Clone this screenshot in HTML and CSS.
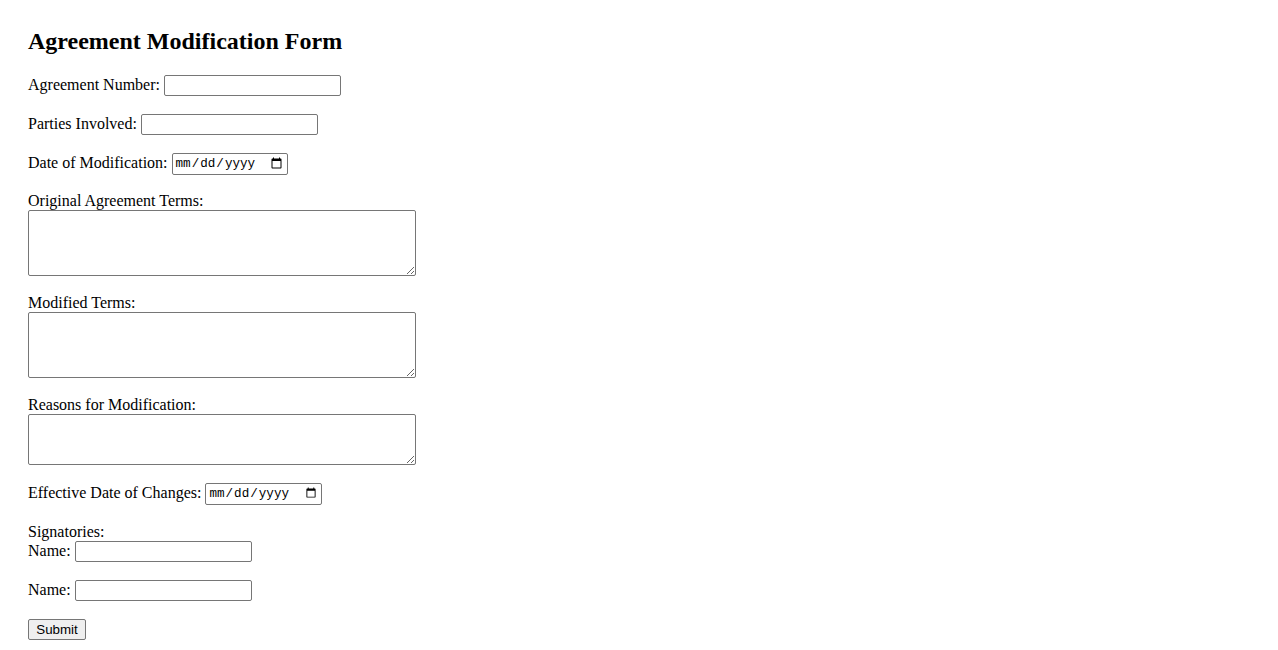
FILE: index.html
```html
<!DOCTYPE html>
<html lang="en">
<head>
<meta charset="utf-8">
<title>Agreement Modification Form</title>
<link rel="stylesheet" href="styles.css">
</head>
<body>
<div class="page">
  <h2 class="title">Agreement Modification Form</h2>
  <form class="form">
    <div class="row"><label>Agreement Number:</label><input class="text" type="text"></div>
    <div class="row"><label>Parties Involved:</label><input class="text" type="text"></div>
    <div class="row"><label>Date of Modification:</label><input class="date" type="date"></div>
    <div class="block"><label class="block-label">Original Agreement Terms:</label><textarea class="area area-lg"></textarea></div>
    <div class="block"><label class="block-label">Modified Terms:</label><textarea class="area area-lg"></textarea></div>
    <div class="block"><label class="block-label">Reasons for Modification:</label><textarea class="area area-sm"></textarea></div>
    <div class="row"><label>Effective Date of Changes:</label><input class="date date-wide" type="date"></div>
    <div class="block">
      <label class="block-label block-label-low">Signatories:</label>
      <div class="row row-tight"><label>Name:</label><input class="text" type="text"></div>
    </div>
    <div class="row"><label>Name:</label><input class="text" type="text"></div>
    <div class="row"><button class="btn" type="submit">Submit</button></div>
  </form>
</div>
</body>
</html>
```
FILE: styles.css
```css
html, body {
  margin: 0;
  padding: 0;
  background: #ffffff;
}
body {
  font-family: "Liberation Serif", "Times New Roman", serif;
  font-size: 16px;
  color: #000000;
}
.page {
  padding: 27px 28px 0 28px;
}
.title {
  font-size: 24px;
  font-weight: bold;
  margin: 0 0 19px 0;
  line-height: 28px;
}
.form {
  margin: 0;
}
.row {
  display: flex;
  align-items: center;
  gap: 4px;
  height: 23px;
  margin: 0 0 16px 0;
}
.row-tight {
  margin: 0;
}
.row label {
  line-height: 18px;
  padding-bottom: 2px;
}
.block {
  display: flex;
  flex-direction: column;
  align-items: flex-start;
  margin: 0 0 16px 0;
}
.block-label {
  display: block;
  line-height: 19px;
  height: 19px;
}
.block-label-low {
  padding-top: 1px;
  height: 18px;
  line-height: 19px;
  overflow: visible;
}
.text {
  width: 177px;
  height: 21px;
  box-sizing: border-box;
  border: 1px solid #767676;
  border-radius: 2px;
  padding: 1px 2px;
  margin: 0;
  font-size: 13.33px;
  font-family: "Liberation Sans", Arial, sans-serif;
}
.date {
  width: 116px;
  height: 22px;
  box-sizing: border-box;
  border: 1px solid #767676;
  border-radius: 2px;
  padding: 1px 2px;
  margin: 0;
  font-size: 12.6px;
  font-family: "Liberation Mono", "Courier New", monospace;
}
.date-wide {
  width: 117px;
}
.area {
  display: block;
  width: 388px;
  box-sizing: border-box;
  border: 1px solid #767676;
  border-radius: 2px;
  padding: 2px;
  font-family: "Liberation Mono", monospace;
  font-size: 13.33px;
  margin: 0 0 1px 0;
}
.area-lg {
  height: 66px;
}
.area-sm {
  height: 51px;
}
.btn {
  width: 58px;
  height: 21px;
  box-sizing: border-box;
  font-family: "Liberation Sans", Arial, sans-serif;
  font-size: 13.33px;
  padding: 1px 6px;
  margin: 0;
  border: 1px solid #767676;
  border-radius: 2px;
  background: #efefef;
  color: #000000;
}
```
